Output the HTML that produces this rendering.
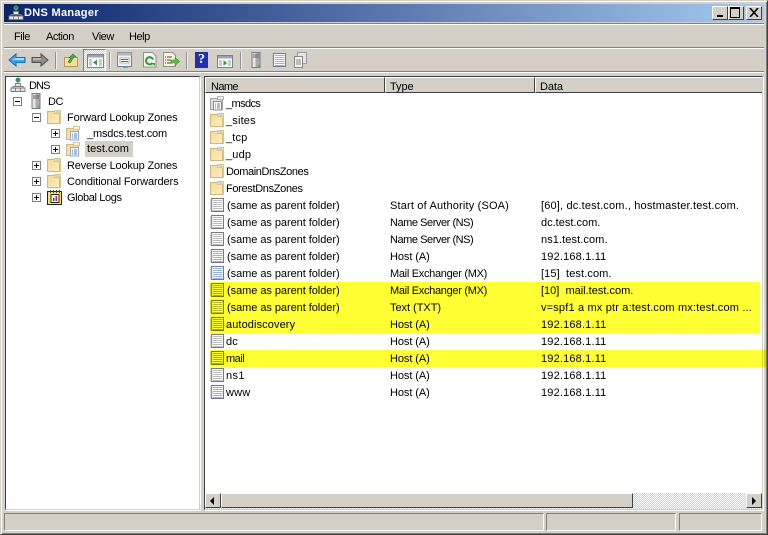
<!DOCTYPE html>
<html><head><meta charset="utf-8"><title>DNS Manager</title>
<style>
html,body{margin:0;padding:0;background:#d4d0c8}
body{width:768px;height:535px;position:relative;overflow:hidden;font:11px "Liberation Sans",sans-serif;color:#000}
div,span,svg{position:absolute}
.t{white-space:nowrap;line-height:14px;height:14px;letter-spacing:.17px;margin-top:1px}
.n{letter-spacing:-.05px}.mx{letter-spacing:-.3px}.ns{letter-spacing:-.45px}.h{letter-spacing:-.08px}.m{letter-spacing:-.45px}
.hl{background:#ffff33;mix-blend-mode:multiply;z-index:5}
.sep{width:1px;height:17px;top:52px;background:#909090;border-right:1px solid #eee}
.hd{top:77px;height:14px;background:#d4d0c8;border-top:1px solid #fff;border-left:1px solid #fff;border-right:1px solid #404040;border-bottom:1px solid #404040;box-sizing:content-box}
.box{width:7px;height:7px;border:1px solid #808080;background:#fff}
.box:before{content:"";position:absolute;left:1px;top:3px;width:5px;height:1px;background:#000}
.box.p:after{content:"";position:absolute;left:3px;top:1px;width:1px;height:5px;background:#000}
.wb{top:6px;width:14px;height:12px;background:#d4d0c8;border:1px solid;border-color:#fff #404040 #404040 #fff}
.sb{background:#d4d0c8;border:1px solid;border-color:#fff #404040 #404040 #fff}
.st{top:513px;height:16px;border:1px solid;border-color:#808080 #fff #fff #808080}
</style></head><body>
<svg width="0" height="0" style="left:0;top:0">
<defs>
<linearGradient id="fg" x1="0" y1="0" x2="1" y2="1"><stop offset="0" stop-color="#f5d98c"/><stop offset="1" stop-color="#fdf0c4"/></linearGradient>
<symbol id="folder" viewBox="0 0 16 16"><path d="M1.500 14.500V2.500h12v12z" fill="url(#fg)" stroke="#d0b680"/><path d="M8.500 1.500h6v13h-1V4.500h-5z" fill="#fdf6dc" stroke="#d0b680" stroke-width=".8"/><path d="M9.500 3h4" stroke="#7eb0dc"/></symbol>
<symbol id="zone" viewBox="0 0 16 16"><path d="M1.500 14.500V3.500h12v11z" fill="url(#fg)" stroke="#d0b680"/><path d="M8.500 1.500h6v3h-6z" fill="#fdf6dc" stroke="#d0b680" stroke-width=".8"/><path d="M5.500 6.500h8v8.500h-8z" fill="#fff" stroke="#8fa6c2"/><path d="M7 9h1M9 9h3M7 11h1M9 11h3M7 13h1M9 13h3" stroke="#4c7cb8"/></symbol>
<symbol id="gzone" viewBox="0 0 16 16"><path d="M1.500 14.500V3.500h12v11z" fill="#dcdcdc" stroke="#a4a4a4"/><path d="M8.500 1.500h6v3h-6z" fill="#eee" stroke="#a4a4a4" stroke-width=".8"/><path d="M4.500 6.500h8v8.500h-8z" fill="#fff" stroke="#8c8c8c"/><path d="M6 9h1M8 9h3M6 11h1M8 11h3M6 13h1M8 13h3" stroke="#777"/></symbol>
<symbol id="rec" viewBox="0 0 16 16"><path d="M2.500 1.500h12v13h-12z" fill="#fff" stroke="#6c7c98"/><path d="M1 3h2.500M1 5h2.500M1 7h2.500M1 9h2.500M1 11h2.500M1 13h2.500" stroke="#a4a4a4"/><path d="M4 3.500h9.500M4 5.500h9.500M4 7.500h9.500M4 9.500h9.500M4 11.500h9.500M4 13.500h9.500" stroke="#94b4dc" stroke-width=".9"/></symbol>
<symbol id="rec2" viewBox="0 0 16 16"><path d="M2.500 1.500h12v13h-12z" fill="#fff" stroke="#7a7a7a"/><path d="M1 3h2.500M1 5h2.500M1 7h2.500M1 9h2.500M1 11h2.500M1 13h2.500" stroke="#a4a4a4"/><path d="M4 3.500h9.500M4 5.500h9.500M4 7.500h9.500M4 9.500h9.500M4 11.500h9.500M4 13.500h9.500" stroke="#bcbcbc" stroke-width=".9"/></symbol>
<symbol id="dns" viewBox="0 0 16 16"><circle cx="8" cy="3" r="2.500" fill="#3e9a58"/><path d="M6.500 2.500l2-1 1 1-2 1z" fill="#2c6cc0"/><path d="M8 5v3M3 11V9.500h10V11" stroke="#777" fill="none"/><path d="M5.500 6.500h5v3h-5zM1 11h4.500v3.500H1zM10.500 11h4.500v3.500h-4.500zM5.500 11h5v3.500h-5z" fill="#e4e6ea" stroke="#7a7a7a" stroke-width=".9"/></symbol>
<symbol id="srv" viewBox="0 0 16 16"><path d="M4 .5h8v15H4z" fill="#a8acb0" stroke="#7c7c7c"/><path d="M4.500 1h3v14h-3z" fill="#e4e4e4"/><path d="M5 3h6M5 5h6" stroke="#666"/><path d="M10 13h1.500v1.500H10z" fill="#3cc03c"/></symbol>
</defs></svg>

<!-- window chrome -->
<div style="left:0;top:0;width:768px;height:535px;box-sizing:border-box;border:1px solid;border-color:#d4d0c8 #404040 #404040 #d4d0c8;box-shadow:inset 1px 1px 0 #fff,inset -1px -1px 0 #808080"></div>

<!-- title bar -->
<div style="left:4px;top:4px;width:760px;height:18px;background:linear-gradient(90deg,#0a246a,#a6caf0)"></div>
<svg style="left:8px;top:5px" width="16" height="16"><use href="#dns"/></svg>
<div class="t" style="left:24px;top:5px;color:#fff;font-weight:bold;font-size:11px;letter-spacing:.3px">DNS Manager</div>
<div class="wb" style="left:712px"><span style="left:4px;top:8px;width:6px;height:2px;background:#000"></span></div>
<div class="wb" style="left:728px"><span style="left:1px;top:0px;width:8px;height:8px;border:1px solid #000;border-top-width:2px"></span></div>
<div class="wb" style="left:746px"><svg style="left:2px;top:1px" width="10" height="9"><path d="M1 0l8 9M9 0l-8 9" stroke="#000" stroke-width="1.600"/></svg></div>

<!-- menu -->
<div style="left:4px;top:23px;width:760px;height:1px;background:#808080"></div>
<div style="left:4px;top:24px;width:760px;height:1px;background:#fff"></div>
<div class="t m" style="left:14px;top:29px">File</div>
<div class="t m" style="left:46px;top:29px">Action</div>
<div class="t m" style="left:92px;top:29px">View</div>
<div class="t m" style="left:129px;top:29px">Help</div>
<div style="left:4px;top:47px;width:760px;height:1px;background:#808080"></div>
<div style="left:4px;top:48px;width:760px;height:1px;background:#fff"></div>

<!-- toolbar -->
<svg style="left:8px;top:52px" width="18" height="16"><path d="M1 8l7-6v3.500h9v5H8V14z" fill="#3ea2ea" stroke="#1a6cb0"/><path d="M8 6h8v2H4z" fill="#a6dcfa"/></svg>
<svg style="left:31px;top:52px" width="18" height="16"><path d="M17 8l-7-6v3.500H1v5h9V14z" fill="#8c8c8c" stroke="#505050"/><path d="M2 6h8v2H2z" fill="#b4b4b4"/></svg>
<div class="sep" style="left:55px"></div>
<svg style="left:63px;top:52px" width="16" height="16"><path d="M1.500 14.500V5.500h13v9z" fill="#f6de9e" stroke="#b89a50"/><path d="M5 10l3-4H6l4-4 3 3h-2l-4 6z" fill="#4cae3c" stroke="#2a7a20" stroke-width=".6"/></svg>
<div style="left:83px;top:49px;width:21px;height:21px;border:1px solid;border-color:#808080 #fff #fff #808080;background-image:repeating-conic-gradient(#d4d0c8 0 25%,#fff 0 50%);background-size:2px 2px"></div>
<svg style="left:87px;top:54px" width="17" height="14"><path d="M.5.500h16v13H.5z" fill="#fff" stroke="#808080"/><path d="M1 1h15v2.500H1z" fill="#9aa6b4"/><path d="M2 5h3v7H2zM12 5h3v7h-3z" fill="#c4ccd4"/><path d="M10 5.500v6l-4-3z" fill="#3a9a3a"/></svg>
<div class="sep" style="left:109px"></div>
<svg style="left:117px;top:52px" width="15" height="16"><path d="M.5.500h14v14H.5z" fill="#eef0f2" stroke="#808080"/><path d="M.5.500h14v3H.5z" fill="#b0b8c0"/><path d="M3 6h9v5H3z" fill="#fff" stroke="#808080" stroke-width=".6"/><path d="M4 7.500h7M4 9.500h7" stroke="#6a6a6a"/><path d="M6 15h5" stroke="#3ea2ea" stroke-width="2"/></svg>
<svg style="left:142px;top:52px" width="15" height="16"><path d="M1.500.500h9l3.500 3.500v11h-12.500z" fill="#f4f4f4" stroke="#909090"/><path d="M11 7.500a3.600 3.600 0 1 0 -.500 3.500" fill="none" stroke="#2e9c2e" stroke-width="2"/><path d="M9 11h4v3z" fill="#2e9c2e"/></svg>
<svg style="left:163px;top:52px" width="17" height="16"><path d="M.5.500h9l3 3v11H.5z" fill="#fdf6dc" stroke="#909090"/><path d="M2 5h1M4 5h5M2 8h1M4 8h4M2 11h1M4 11h5" stroke="#444"/><path d="M8 8h4V5.500l4.500 4-4.500 4V11H8z" fill="#5cc03c" stroke="#3a8a28" stroke-width=".6"/></svg>
<div class="sep" style="left:186px"></div>
<div style="left:195px;top:52px;width:13px;height:16px;background:#2030b0;color:#fff;font:bold 14px/16px 'Liberation Serif',serif;text-align:center">?</div>
<svg style="left:217px;top:55px" width="16" height="13"><path d="M.5.500h15v12H.5z" fill="#fff" stroke="#808080"/><path d="M1 1h14v2.500H1z" fill="#9aa6b4"/><path d="M11 5h3v6h-3zM2 5h3v6H2z" fill="#c4ccd4"/><path d="M6.500 5v6l3.500-3z" fill="#2e9c2e"/></svg>
<div class="sep" style="left:240px"></div>
<svg style="left:248px;top:52px" width="16" height="16"><use href="#srv"/></svg>
<svg style="left:271px;top:52px" width="16" height="16"><use href="#rec"/></svg>
<svg style="left:293px;top:52px" width="16" height="16"><path d="M4.500.500h9v11h-9z" fill="#e4e4e4" stroke="#999"/><path d="M1.500 4.500h8v11h-8z" fill="#f4f4f4" stroke="#888"/><path d="M3 8h5M3 10h5M3 12h5" stroke="#888"/></svg>

<div style="left:4px;top:71px;width:760px;height:1px;background:#808080"></div>
<div style="left:4px;top:72px;width:760px;height:1px;background:#fff"></div>

<!-- left pane -->
<div style="left:5px;top:76px;width:193px;height:432px;background:#fff;border:1px solid;border-color:#404040 #d4d0c8 #d4d0c8 #404040;box-shadow:1px 1px 0 #fff"></div>
<svg style="left:10px;top:77px" width="16" height="16"><use href="#dns"/></svg>
<div class="t" style="left:29px;top:78px;letter-spacing:-.9px">DNS</div>
<div class="box" style="left:13px;top:97px"></div>
<svg style="left:28px;top:93px" width="16" height="16"><use href="#srv"/></svg>
<div class="t" style="left:48px;top:94px;letter-spacing:-.5px">DC</div>
<div class="box" style="left:32px;top:113px"></div>
<svg style="left:46px;top:109px" width="16" height="16"><use href="#folder"/></svg>
<div class="t" style="left:67px;top:110px;letter-spacing:-.13px">Forward Lookup Zones</div>
<div class="box p" style="left:51px;top:129px"></div>
<svg style="left:65px;top:125px" width="16" height="16"><use href="#zone"/></svg>
<div class="t" style="left:87px;top:126px;letter-spacing:-.17px">_msdcs.test.com</div>
<div class="box p" style="left:51px;top:145px"></div>
<svg style="left:65px;top:141px" width="16" height="16"><use href="#zone"/></svg>
<div class="t" style="left:85px;top:140px;width:44px;height:16px;line-height:16px;padding:0 2px;background:#d4d0c8;letter-spacing:.05px">test.com</div>
<div class="box p" style="left:32px;top:161px"></div>
<svg style="left:46px;top:157px" width="16" height="16"><use href="#folder"/></svg>
<div class="t" style="left:67px;top:158px;letter-spacing:-.18px">Reverse Lookup Zones</div>
<div class="box p" style="left:32px;top:177px"></div>
<svg style="left:46px;top:173px" width="16" height="16"><use href="#folder"/></svg>
<div class="t" style="left:67px;top:174px;letter-spacing:-.1px">Conditional Forwarders</div>
<div class="box p" style="left:32px;top:193px"></div>
<svg style="left:47px;top:189px" width="16" height="16"><path d="M.5 2.500h14v13H.5z" fill="#f6e070" stroke="#222"/><path d="M4 5.500h8v8H4z" fill="#fff" stroke="#222"/><path d="M6 12V9h1.500v3z" fill="#2040c0"/><path d="M8.500 12V7H10v5z" fill="#c02020"/><path d="M3 1h1v3H3zM6 1h1v3H6zM9 1h1v3H9zM12 1h1v3h-1z" fill="#444"/></svg>
<div class="t" style="left:67px;top:190px;letter-spacing:-.37px">Global Logs</div>

<!-- right pane -->
<div style="left:204px;top:76px;width:557px;height:432px;background:#fff;border:1px solid;border-color:#404040 #d4d0c8 #d4d0c8 #404040;box-shadow:1px 1px 0 #fff"></div>
<div class="hd" style="left:205px;width:178px"></div>
<div class="hd" style="left:385px;width:148px"></div>
<div class="hd" style="left:535px;width:226px;border-right:none"></div>
<div class="t" style="left:211px;top:79px;letter-spacing:-.6px">Name</div>
<div class="t h" style="left:390px;top:79px">Type</div>
<div class="t h" style="left:540px;top:79px">Data</div>

<svg style="left:209px;top:95px" width="16" height="16"><use href="#gzone"/></svg><div class="t" style="left:226px;top:96px;letter-spacing:-.6px">_msdcs</div>
<svg style="left:209px;top:112px" width="16" height="16"><use href="#folder"/></svg><div class="t" style="left:226px;top:113px">_sites</div>
<svg style="left:209px;top:129px" width="16" height="16"><use href="#folder"/></svg><div class="t" style="left:226px;top:130px">_tcp</div>
<svg style="left:209px;top:146px" width="16" height="16"><use href="#folder"/></svg><div class="t" style="left:226px;top:147px">_udp</div>
<svg style="left:209px;top:163px" width="16" height="16"><use href="#folder"/></svg><div class="t" style="left:226px;top:164px;letter-spacing:-.4px">DomainDnsZones</div>
<svg style="left:209px;top:180px" width="16" height="16"><use href="#folder"/></svg><div class="t" style="left:226px;top:181px;letter-spacing:-.33px">ForestDnsZones</div>

<svg style="left:209px;top:197px" width="16" height="16"><use href="#rec2"/></svg><div class="t n" style="left:227px;top:198px">(same as parent folder)</div><div class="t" style="left:390px;top:198px">Start of Authority (SOA)</div><div class="t" style="left:541px;top:198px">[60], dc.test.com., hostmaster.test.com.</div>
<svg style="left:209px;top:214px" width="16" height="16"><use href="#rec2"/></svg><div class="t n" style="left:227px;top:215px">(same as parent folder)</div><div class="t ns" style="left:390px;top:215px">Name Server (NS)</div><div class="t" style="left:541px;top:215px;letter-spacing:0">dc.test.com.</div>
<svg style="left:209px;top:231px" width="16" height="16"><use href="#rec2"/></svg><div class="t n" style="left:227px;top:232px">(same as parent folder)</div><div class="t ns" style="left:390px;top:232px">Name Server (NS)</div><div class="t" style="left:541px;top:232px;letter-spacing:.09px">ns1.test.com.</div>
<svg style="left:209px;top:248px" width="16" height="16"><use href="#rec"/></svg><div class="t n" style="left:227px;top:249px">(same as parent folder)</div><div class="t h" style="left:390px;top:249px">Host (A)</div><div class="t" style="left:541px;top:249px">192.168.1.11</div>
<svg style="left:209px;top:265px" width="16" height="16"><use href="#rec"/></svg><div class="t n" style="left:227px;top:266px">(same as parent folder)</div><div class="t mx" style="left:390px;top:266px">Mail Exchanger (MX)</div><div class="t" style="left:541px;top:266px;letter-spacing:.1px">[15]&nbsp; test.com.</div>
<svg style="left:209px;top:282px" width="16" height="16"><use href="#rec"/></svg><div class="t n" style="left:227px;top:283px">(same as parent folder)</div><div class="t mx" style="left:390px;top:283px">Mail Exchanger (MX)</div><div class="t" style="left:541px;top:283px;letter-spacing:0">[10]&nbsp; mail.test.com.</div>
<svg style="left:209px;top:299px" width="16" height="16"><use href="#rec2"/></svg><div class="t n" style="left:227px;top:300px">(same as parent folder)</div><div class="t" style="left:390px;top:300px;letter-spacing:-.03px">Text (TXT)</div><div class="t" style="left:541px;top:300px">v=spf1 a mx ptr a:test.com mx:test.com ...</div>
<svg style="left:209px;top:316px" width="16" height="16"><use href="#rec"/></svg><div class="t" style="left:226px;top:317px;letter-spacing:.1px">autodiscovery</div><div class="t h" style="left:390px;top:317px">Host (A)</div><div class="t" style="left:541px;top:317px">192.168.1.11</div>
<svg style="left:209px;top:333px" width="16" height="16"><use href="#rec2"/></svg><div class="t" style="left:226px;top:334px">dc</div><div class="t h" style="left:390px;top:334px">Host (A)</div><div class="t" style="left:541px;top:334px">192.168.1.11</div>
<svg style="left:209px;top:350px" width="16" height="16"><use href="#rec"/></svg><div class="t" style="left:226px;top:351px;letter-spacing:-.5px">mail</div><div class="t h" style="left:390px;top:351px">Host (A)</div><div class="t" style="left:541px;top:351px">192.168.1.11</div>
<svg style="left:209px;top:367px" width="16" height="16"><use href="#rec2"/></svg><div class="t" style="left:226px;top:368px;letter-spacing:.4px">ns1</div><div class="t h" style="left:390px;top:368px">Host (A)</div><div class="t" style="left:541px;top:368px">192.168.1.11</div>
<svg style="left:209px;top:384px" width="16" height="16"><use href="#rec"/></svg><div class="t" style="left:226px;top:385px">www</div><div class="t h" style="left:390px;top:385px">Host (A)</div><div class="t" style="left:541px;top:385px">192.168.1.11</div>

<!-- highlights -->
<div class="hl" style="left:210px;top:282px;width:550px;height:52px"></div>
<div class="hl" style="left:210px;top:350px;width:558px;height:17px"></div>

<!-- scrollbar -->
<div style="left:205px;top:493px;width:557px;height:16px;background-color:#eceae6;background-image:repeating-conic-gradient(#d4d0c8 0 25%,#fff 0 50%);background-size:2px 2px"></div>
<div class="sb" style="left:205px;top:493px;width:14px;height:13px"><svg style="left:4px;top:3px" width="6" height="8"><path d="M4 0v8L0 4z" fill="#000"/></svg></div>
<div class="sb" style="left:221px;top:493px;width:410px;height:13px"></div>
<div class="sb" style="left:746px;top:493px;width:14px;height:13px"><svg style="left:5px;top:3px" width="6" height="8"><path d="M0 0v8l4-4z" fill="#000"/></svg></div>

<!-- status bar -->
<div class="st" style="left:4px;width:538px"></div>
<div class="st" style="left:546px;width:128px"></div>
<div class="st" style="left:679px;width:81px"></div>
</body></html>
